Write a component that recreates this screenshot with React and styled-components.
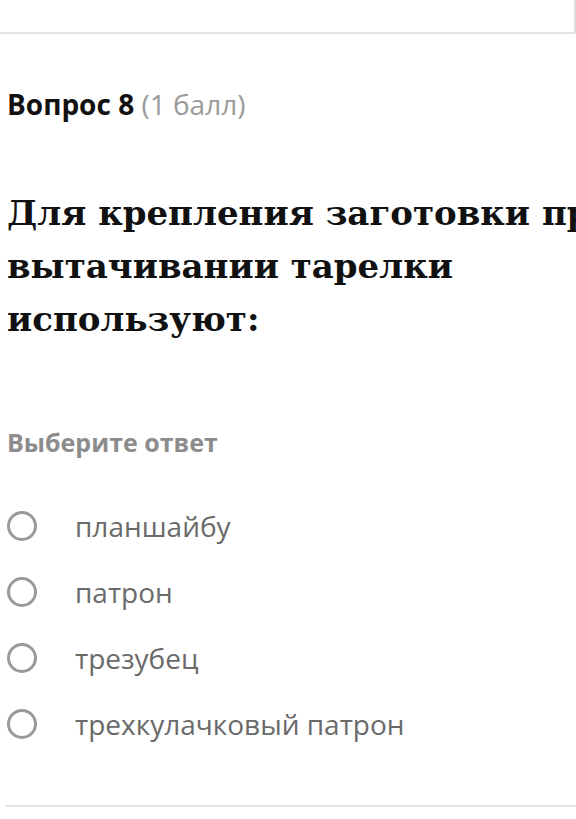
import React from 'react';
import styled, { createGlobalStyle } from 'styled-components';

const GlobalStyle = createGlobalStyle`
  html, body {
    margin: 0;
    padding: 0;
    background: #fff;
  }
  body {
    width: 576px;
    overflow: hidden;
  }
`;

const Page = styled.div`
  width: 576px;
  height: 819px;
  overflow: hidden;
  font-family: "Open Sans", "Liberation Sans", sans-serif;
`;

const TopCard = styled.div`
  height: 32px;
  border-right: 2px solid #dedede;
  border-bottom: 2px solid #e4e4e4;
`;

const Question = styled.section`
  padding: 54px 0 0 7px;
`;

const Heading = styled.div`
  font-size: 28px;
  line-height: 32px;
  color: #111;
  font-weight: 700;
`;

const Points = styled.span`
  font-weight: 400;
  color: #9a9a9a;
`;

const Title = styled.h2`
  width: 640px;
  margin: 67px 0 0;
  font-family: "DejaVu Serif", "Liberation Serif", serif;
  font-size: 34px;
  line-height: 53px;
  font-weight: 700;
  color: #111;
`;

const Prompt = styled.div`
  margin-top: 81px;
  font-size: 25px;
  line-height: 30px;
  font-weight: 700;
  color: #8c8c8c;
`;

const Options = styled.div`
  display: flex;
  flex-direction: column;
  margin-top: 36px;
`;

const Option = styled.label`
  display: flex;
  align-items: center;
  height: 66px;
  gap: 38px;
`;

const Radio = styled.span`
  width: 24px;
  height: 24px;
  border: 3.5px solid #9a9a9a;
  border-radius: 50%;
  flex: none;
`;

const OptionText = styled.span`
  font-size: 28px;
  color: #6a6a6a;
`;

const Divider = styled.div`
  margin: 48px 0 0 5px;
  border-top: 2px solid #e4e4e4;
`;

const answers = ['планшайбу', 'патрон', 'трезубец', 'трехкулачковый патрон'];

export default function App() {
  return (
    <>
      <GlobalStyle />
      <Page>
        <TopCard />
        <Question>
          <Heading>
            Вопрос 8 <Points>(1 балл)</Points>
          </Heading>
          <Title>Для крепления заготовки при вытачивании тарелки используют:</Title>
          <Prompt>Выберите ответ</Prompt>
          <Options>
            {answers.map((a) => (
              <Option key={a}>
                <Radio />
                <OptionText>{a}</OptionText>
              </Option>
            ))}
          </Options>
        </Question>
        <Divider />
      </Page>
    </>
  );
}
